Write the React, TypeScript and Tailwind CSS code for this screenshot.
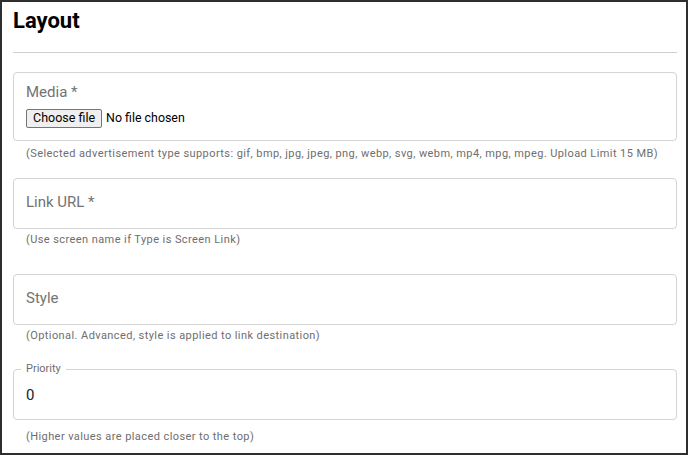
export default function App() {
  const font = { fontFamily: 'Roboto, "Liberation Sans", Arial, sans-serif' };

  return (
    <div
      className="w-[688px] h-[455px] border-2 border-[#2e2e2e] bg-white pl-[11px] pr-[9px] pt-[6px] overflow-hidden"
      style={font}
    >
      <h1 className="text-[22px] leading-[26px] font-bold text-black">Layout</h1>
      <div className="mt-[18px] h-px bg-[#cfcfcf]" />

      {/* Media */}
      <div className="mt-[19px] h-[69px] rounded-[4px] border border-[#d4d4d4] px-[12px] pt-[10px]">
        <div className="text-[15px] leading-[18px] text-[#737373]">Media *</div>
        <div className="mt-[8px] flex items-center gap-[4px]">
          <button className="h-[19px] px-[6px] rounded-[2px] border border-[#767676] bg-[#efefef] text-[12.5px] leading-none text-black">
            Choose file
          </button>
          <span className="text-[12.4px] leading-none text-black">No file chosen</span>
        </div>
      </div>
      <p className="mt-[6px] pl-[13px] text-[11px] leading-[14px] tracking-[0.42px] text-[#6e6e6e]">
        (Selected advertisement type supports: gif, bmp, jpg, jpeg, png, webp, svg, webm, mp4, mpg, mpeg. Upload Limit 15 MB)
      </p>

      {/* Link URL */}
      <div className="mt-[17px] h-[51px] rounded-[4px] border border-[#d4d4d4] px-[12px] pb-[3px] flex items-center">
        <span className="text-[15px] leading-[18px] text-[#737373]">Link URL *</span>
      </div>
      <p className="mt-[4px] pl-[13px] text-[11px] leading-[14px] tracking-[0.42px] text-[#6e6e6e]">
        (Use screen name if Type is Screen Link)
      </p>

      {/* Style */}
      <div className="mt-[27px] h-[51px] rounded-[4px] border border-[#d4d4d4] px-[12px] pb-[3px] flex items-center">
        <span className="text-[15px] leading-[18px] text-[#737373]">Style</span>
      </div>
      <p className="mt-[4px] pl-[13px] text-[11px] leading-[14px] tracking-[0.42px] text-[#6e6e6e]">
        (Optional. Advanced, style is applied to link destination)
      </p>

      {/* Priority */}
      <div className="relative mt-[26px] h-[51px] rounded-[4px] border border-[#d4d4d4] px-[12px] flex items-center">
        <span className="absolute -top-[8px] left-[7px] bg-white px-[5px] text-[11px] leading-[14px] text-[#6e6e6e]">
          Priority
        </span>
        <span className="text-[15px] leading-[18px] text-[#222]">0</span>
      </div>
      <p className="mt-[10px] pl-[13px] text-[11px] leading-[14px] tracking-[0.42px] text-[#6e6e6e]">
        (Higher values are placed closer to the top)
      </p>
    </div>
  );
}
